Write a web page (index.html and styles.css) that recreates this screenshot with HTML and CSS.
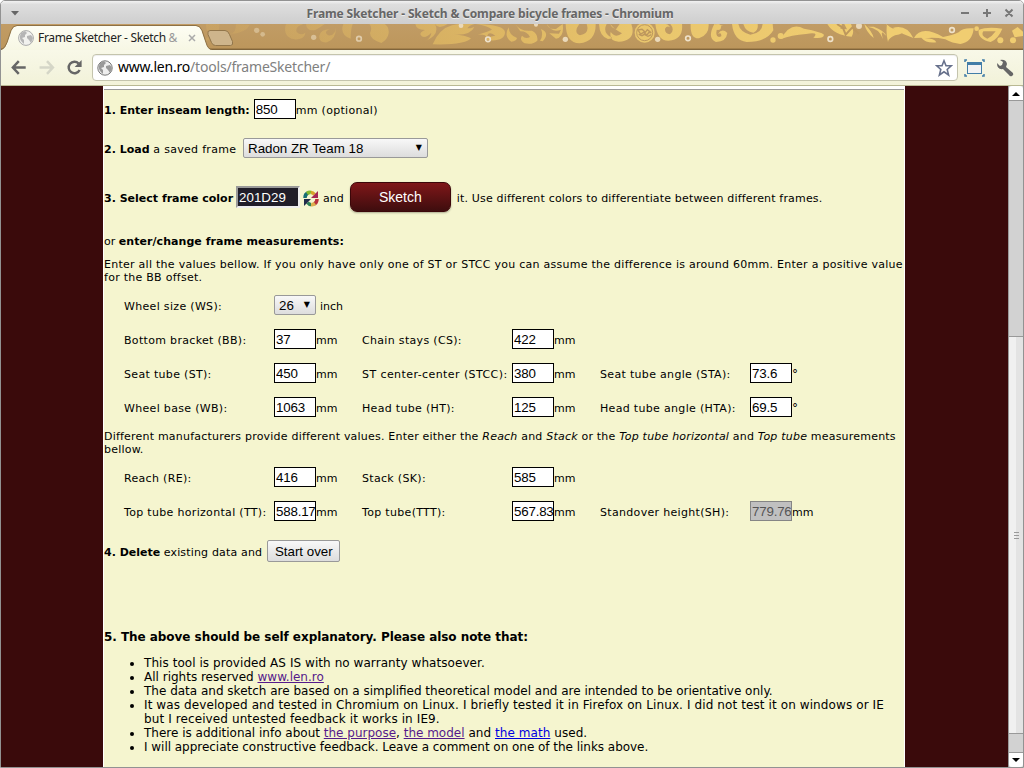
FILE: index.html
```html
<!DOCTYPE html>
<html lang="en">
<head>
<meta charset="utf-8">
<title>Frame Sketcher</title>
<link rel="stylesheet" href="styles.css">
</head>
<body>
<div class="window">
  <header class="titlebar">
    <svg class="menu-arrow" width="10" height="6"><path d="M1 1h8L5 5.500z"/></svg>
    <span class="window-title">Frame Sketcher - Sketch &amp; Compare bicycle frames - Chromium</span>
    <svg class="window-controls" width="56" height="14" fill="none" stroke="#777" stroke-width="2"><path d="M1 7h8M23 7h8M27 3v8M45.500 3.500l7 7M52.500 3.500l-7 7"/></svg>
  </header>

  <div class="tabstrip">
    <svg class="strip-art" width="1024" height="26" viewBox="0 0 1024 26">
      <defs>
        <linearGradient id="gold" gradientUnits="userSpaceOnUse" x1="-60" x2="1900" y1="0" y2="0"><stop offset="0" stop-color="#e7bd62" stop-opacity=".2"/><stop offset=".2" stop-color="#e4bd64" stop-opacity=".5"/><stop offset=".42" stop-color="#e4bd64" stop-opacity=".85"/><stop offset=".6" stop-color="#e9c66d"/><stop offset="1" stop-color="#f0cd71"/></linearGradient>
        <linearGradient id="tabfill" x2="0" y2="1"><stop stop-color="#fdfdf3"/><stop offset="1" stop-color="#f7f7e4"/></linearGradient>
      </defs>
      <g transform="translate(256 -24) scale(.33333)" fill="url(#gold)">
        <path d="M-150 72q-2 25 20 35-30 8-20 15 42-5 40-50zM-60 72q0 30-18 30 45-2 60-28z"/>
        <path d="M90 72c-12 38 18 52 42 44q15-4 16-18-14 10-26-2-6-16 20-24zM150 72q2 23 28 18 18-10 28-18zM240 82q-3 28-24 24-15-10 5-18-26 0-31 19-2 22 23 20 27-8 27-45zM262 72q-12 33 22 44 0-28 6-44zM340 72q10 10 2 27 0 19 34 30 20-12 22-30 2-17-12-27z"/>
        <path d="M478 72q3 18 29 18-17 8-13 15 10 15 32-7-2 16-17 25 44-20 28-51 10 18 38 0zM530 133q20-47 58-57 42-9 68-4-17 4-22 13 22-1 23-8-12 30-64 27 36 1 52 11-20 21-115 18zM660 72q35 5 48 17-17 8-43 15 26-2 28 10 1-24 25-7-27 3-28 13 56 7 57-23-1-23-87-25z"/>
        <path d="M758 82q1 24 25 32-2 10-17 11-24-15-8-43zM778 72q15 24 50 20 19 10 16 30-14 13-38 8-17-10-8-23 10 11 24 4-8-17-29-17zM855 87q28 12 5 37l-8-2q11-16 3-35zM873 72q3 17 27 15l20-15q6 39-20 44l-20-16 29 1 6-12q-27 11-42-17zM929 72q1 57 41 58 50-5 49-58h-27q10 29-20 34-21-9-2-34zM1029 72q2 38 27 45 13-1 12-4-30-14-16-41zM1063 72q3 11 17 16l11-16h35q17 49-38 53-30-2-24-29 15 20 34 4-22-11-35-28z"/>
        <circle cx="1166" cy="98" r="30"/><circle cx="1166" cy="98" r="24" fill="none" stroke="#bd975d" stroke-width="3"/><path d="M1146 90l12-2 10 9 6-8 12 9-7-1-6 8-10-8-9 5zM1148 103l10 4 7-4 11 6 10-5" fill="none" stroke="#bd975d" stroke-width="4"/>
        <path d="M1198 72q6 51 40 50 45-4 40-50h-35q15 18-1 31-16-2-15-17 6-10 15-4-5-10-14-10zM1304 72q-2 45 25 43 31-10 29-43zM1375 72q-23 43 5 54 31-1 34-27-16-16-28 3 11-6 10 7-14 6-15-9-1-21 20-23zM1428 72q5 49 44 54 60 0 80-35l-2-19h-30q-2 28-37 32-31-8-36-32zM1462 72q7 24 30 26 16-7 13-26z"/>
        <path d="M1575 117q29-54 69-31 53 10 60 18-1 13-32 9 20-18-22-11-44 3-75 15zM1714 72q20 34 73 38 10-15-2-38h-20l8 16-20-2 5-14zM1825 72q5 24 28 42-3-18-28-42zM1835 80q35 5 46 37-10-33 8-10 0-13-36-27zM1891 72q24 24 57 18-5 12-31 16-20 9-21 20-7-25-3-54zM1910 84q41-12 62 30-31-10-62-30z"/>
        <path d="M1974 114q22-40 87-3 28-4 47-14 13-15 45-12-4 42-40 47-24-2-45-14-33-7-62-3 30 0 35 12-30 4-45-14z"/>
        <path fill-rule="evenodd" d="M2168 90q25-11 71-4-12 30-35 40-40-9-36-36zm14 4q-10 13 12 22 15-7 25-22z"/><path d="M2268 92l17-11 28 25-37 6z"/>
        <circle cx="1386" cy="81" r="9"/><circle cx="1574" cy="108" r="9"/><circle cx="1551" cy="120" r="8"/><circle cx="2162" cy="86" r="7"/><circle cx="2233" cy="121" r="9"/><circle cx="2271" cy="121" r="9"/>
        <path d="M1743 72l18 12 8 20 20-22 20 20" fill="none" stroke="#bd975d" stroke-width="6"/>
        <g fill="#ead9ba"><circle cx="2" cy="91" r="8" opacity=".5"/><circle cx="20" cy="103" r="7" opacity=".5"/><circle cx="173" cy="112" r="8" opacity=".6"/><circle cx="615" cy="77" r="7"/><circle cx="840" cy="74" r="6"/><circle cx="928" cy="118" r="8"/><circle cx="1205" cy="118" r="8"/><circle cx="1809" cy="78" r="9"/></g>
        <g fill="none" stroke="#eee1ca" stroke-width="5"><circle cx="309" cy="116" r="7" opacity=".7"/><circle cx="696" cy="118" r="7"/><circle cx="1296" cy="115" r="7"/><circle cx="1723" cy="117" r="7"/><circle cx="2088" cy="90" r="7"/></g>
      </g>
      <path d="M0 24.500H1024" stroke="#a3804b"/><path d="M0 25.500H1024" stroke="#80653c"/>
      <path d="M210 6.500h15q3 0 4.500 4l3 7q1 4-2 4h-15q-3 0-4-3l-3.500-8q-1-4 2-4z" fill="#ceb58c" stroke="#92764b"/>
      <path d="M1 26q4-1 6-7l4-12q2-5 6-5H196q4 0 6 5l4 12q2 7 6 7z" fill="url(#tabfill)"/>
      <path d="M1 25.500q4-1 6-7l4-12q2-5 6-5H196q4 0 6 5l4 12q2 7 6 7" fill="none" stroke="#8d7145"/>
    </svg>
    <div class="tab">
      <svg class="globe" width="16" height="16" viewBox="0 0 16 16"><circle cx="8" cy="8" r="7.400" fill="#f1f1ee" stroke="#aaa"/><path d="M3 3l4-2 2 2-2 2v2l-3 1 2 2v4Q1 10 2 6zM9 6l4-1 2 3-2 5-2-3-2-2z" fill="#b5b5b5"/></svg>
      <span class="tab-title">Frame Sketcher - Sketch <i>&amp;</i></span>
      <svg class="tab-close" width="8" height="8" stroke="#aaa" stroke-width="1.500"><path d="M1 1l6 6M7 1L1 7"/></svg>
    </div>
  </div>

  <nav class="toolbar">
    <svg class="nav-icons" width="92" height="35" viewBox="0 0 92 35" fill="none" stroke="#666" stroke-width="2.500">
      <path d="M12.500 17.500H26M19 11l-6 6.500 6 6.500"/><path d="M40 17.500h13M47.500 11l6 6.500-6 6.500" stroke="#d5d6c7"/>
      <path d="M79.500 13.500A5.800 5.800 0 1 0 80.500 20"/><path d="M82.500 10v7h-7z" fill="#666" stroke="none"/>
    </svg>
    <div class="address">
      <svg class="globe" width="16" height="16" viewBox="0 0 16 16"><circle cx="8" cy="8" r="7.200" fill="#eee" stroke="#777"/><path d="M3 3l4-2 2 2-2 2v2l-3 1 2 2v4Q1 10 2 6zM9 6l4-1 2 3-2 5-2-3-2-2z" fill="#999"/></svg>
      <span class="url"><b>www.len.ro</b>/tools/frameSketcher/</span>
      <svg class="star" width="18" height="18" viewBox="0 0 18 18"><path d="M9 1.800l2 5h5.200l-4 3.700 1.400 5.500L9 12.800 4.400 16l1.400-5.500-4-3.700H7z" fill="#fff" stroke="#67718c" stroke-width="1.600"/></svg>
    </div>
    <svg class="tool-icons" width="56" height="24" viewBox="0 0 56 24">
      <rect x="4.500" y="7.500" width="14" height="10" fill="#f2f2f2" stroke="#427da8"/><path d="M4 6h15v3H4z" fill="#427da8"/><path d="M2 6V4h2M19 4h2v2M2 18v2h2M19 20h2v-2" fill="none" stroke="#427da8" stroke-width="1.500"/>
      <path d="M34 7l3 3 2-1 1-3-3-2q6-1 7 4l-1 3 7 6q1 2-1 3-2 1-3-1l-6-6q-6 1-6-6z" fill="#666"/>
    </svg>
  </nav>

  <div class="viewport">
    <main class="page">
      <div class="rule"></div>
      <div class="row inseam"><p><b>1. Enter inseam length:</b></p><input class="field" value="850"><p class="loose">mm (optional)</p></div>
      <div class="row load"><p class="loose"><b>2. Load</b> a saved frame</p><div class="select wide">Radon ZR Team 18<i>▼</i></div></div>
      <div class="row color"><p><b>3. Select frame color</b></p><input class="swatch" value="201D29">
        <svg class="wheel" width="16" height="17" viewBox="0 0 16 17" fill="none" stroke-width="3.500"><path d="M2 8Q2 4 5 3" stroke="#176f72"/><path d="M4 3.500Q6 2 8 2.500" stroke="#87b82d"/><path d="M8 2.500q2 0 3.500 2" stroke="#d7a22c"/><path d="M15 1v7H8z" fill="#a52555"/><path d="M14 9q0 4-3 5" stroke="#b8313d"/><path d="M12 13.500q-2 1.500-4 1" stroke="#dcb14d"/><path d="M8 14.500q-2 0-3.500-2" stroke="#2d8056"/><path d="M1 16V9h7z" fill="#222b4a"/></svg>
        <p>and</p><button class="sketch">Sketch</button><p class="mid">it. Use different colors to differentiate between different frames.</p></div>
      <div class="row or"><p>or <b>enter/change frame measurements:</b></p></div>
      <p class="note first">Enter all the values bellow. If you only have only one of ST or STCC you can assume the difference is around 60mm. Enter a positive value<br>for the BB offset.</p>
      <div class="measures">
        <label>Wheel size (WS):</label><div class="cell"><div class="select small">26<i>▼</i></div><p class="inch">inch</p></div><label></label><div></div><label></label><div></div>
        <label>Bottom bracket (BB):</label><div class="cell"><input class="field" value="37"><p>mm</p></div><label>Chain stays (CS):</label><div class="cell"><input class="field" value="422"><p>mm</p></div><label></label><div></div>
        <label>Seat tube (ST):</label><div class="cell"><input class="field" value="450"><p>mm</p></div><label class="looser">ST center-center (STCC):</label><div class="cell"><input class="field" value="380"><p>mm</p></div><label>Seat tube angle (STA):</label><div class="cell"><input class="field" value="73.6"><p class="degree">°</p></div>
        <label>Wheel base (WB):</label><div class="cell"><input class="field" value="1063"><p>mm</p></div><label>Head tube (HT):</label><div class="cell"><input class="field" value="125"><p>mm</p></div><label>Head tube angle (HTA):</label><div class="cell"><input class="field" value="69.5"><p class="degree">°</p></div>
      </div>
      <p class="note second">Different manufacturers provide different values. Enter either the <em>Reach</em> and <em>Stack</em> or the <em>Top tube horizontal</em> and <em>Top tube</em> measurements<br>bellow.</p>
      <div class="measures">
        <label>Reach (RE):</label><div class="cell"><input class="field" value="416"><p>mm</p></div><label>Stack (SK):</label><div class="cell"><input class="field" value="585"><p>mm</p></div><label></label><div></div>
        <label>Top tube horizontal (TT):</label><div class="cell"><input class="field" value="588.17"><p>mm</p></div><label>Top tube(TTT):</label><div class="cell"><input class="field" value="567.83"><p>mm</p></div><label>Standover height(SH):</label><div class="cell"><input class="field off" value="779.76" readonly><p>mm</p></div>
      </div>
      <div class="row delete"><p><b>4. Delete</b> <span class="mid">existing data and</span></p><button class="plain">Start over</button></div>
      <h2>5. The above should be self explanatory. Please also note that:</h2>
      <ul>
        <li class="spaced">This tool is provided AS IS with no warranty whatsoever.</li>
        <li>All rights reserved <a class="visited">www.len.ro</a></li>
        <li>The data and sketch are based on a simplified theoretical model and are intended to be orientative only.</li>
        <li class="wide-text">It was developed and tested in Chromium on Linux. I briefly tested it in Firefox on Linux. I did not test it on windows or IE<br>but I received untested feedback it works in IE9.</li>
        <li>There is additional info about <a class="visited">the purpose</a>, <a class="visited">the model</a> <span class="spaced">and <a>the math</a> used.</span></li>
        <li class="tight">I will appreciate constructive feedback. Leave a comment on one of the links above.</li>
      </ul>
    </main>
    <div class="scrollbar">
      <div class="arrow"><svg width="9" height="5"><path d="M0 5h8L4 1z"/></svg></div>
      <div class="track"></div>
      <div class="thumb"><span></span><span></span><span></span></div>
      <div class="track end"></div>
      <div class="arrow down"><svg width="9" height="5"><path d="M0 0h8L4 4z"/></svg></div>
    </div>
  </div>
</div>
</body>
</html>
```
FILE: styles.css
```css
* { box-sizing: border-box; }
body { margin: 0; background: #fff; overflow: hidden; font: 11px/13px "DejaVu Sans", sans-serif; color: #000; }
p { margin: 0; white-space: nowrap; }
i { font-style: normal; }
svg { display: block; flex: none; }
.window { width: 1024px; height: 768px; border: 1px solid #929292; border-radius: 5px 5px 0 0; overflow: hidden; display: flex; flex-direction: column; }
.titlebar { height: 23px; flex: none; display: flex; align-items: center; justify-content: space-between; padding: 1px 7px 0 9px; background: linear-gradient(#f2f2f2, #dedede 15%, #cecece); }
.menu-arrow { fill: #666; }
.window-title { padding-top: 1px; font: bold 12px/20px "Noto Sans", sans-serif; color: #666; text-shadow: 0 1px #eee; letter-spacing: -.15px; }
.tabstrip { height: 26px; flex: none; position: relative; background: linear-gradient(#c19c65, #bc965b); }
.strip-art { position: absolute; left: -1px; top: 0; }
.tab { position: relative; display: flex; align-items: center; width: 212px; height: 26px; padding: 2px 0 0 17px; }
.tab-title { width: 146px; margin-left: 4px; font: 12px/20px "Noto Sans", sans-serif; color: #222; white-space: nowrap; letter-spacing: -.32px; }
.tab-title i { color: #999; }
.tab-close { margin-left: 4px; }
.toolbar { height: 36px; flex: none; display: flex; align-items: center; background: linear-gradient(#f8f8e8, #f2f2d9); border-bottom: 1px solid #b9b994; }
.nav-icons { width: 91px; margin-left: -1px; margin-right: 1px; }
.address { width: 866px; height: 27px; display: flex; align-items: center; padding: 0 4px; background: #fff; border: 1px solid #c4c4ad; border-radius: 4px; box-shadow: inset 0 1px 1px #eee; }
.url { flex: 1; margin-left: 5px; padding-bottom: 2px; font: 14px/24px "Noto Sans", sans-serif; color: #808080; letter-spacing: -.2px; }
.url b { font-weight: 400; color: #000; }
.tool-icons { margin-left: 5px; }
.viewport { flex: 1; min-height: 0; display: flex; justify-content: space-between; background: #3a0a0b; padding-left: 102px; }
.page { width: 802px; background: #f5f5cf; border: solid #fff; border-width: 0 1px; overflow: hidden; }
.rule { height: 4px; background: #fff; border-bottom: 1px solid #999; }
.row { display: flex; align-items: center; }
.row p { padding-top: 2px; }
.inseam { height: 38px; }
.inseam .field { margin-left: 4px; }
.load { height: 40px; }
.load p { width: 133px; }
.loose { letter-spacing: .3px; }
.loose b { letter-spacing: 0; }
.mid { letter-spacing: .17px; }
.color { height: 58px; }
.or { height: 30px; }
.row.or p { padding-top: 1px; }
.or b { letter-spacing: .06px; }
.field, .swatch, .select, .plain { font: 13.333px/16px "Liberation Sans", sans-serif; color: #000; }
.field { width: 42px; height: 20px; margin: 0; padding: 1px 0 0 1px; border: 1px solid #000; border-radius: 0; background: #fff; outline: 0; letter-spacing: -.2px; }
.field.off { background: #c0c0c0; color: #555; border-color: #858585; }
.select { display: flex; align-items: center; justify-content: space-between; height: 20px; padding: 2px 5px 0 4px; border: 1px solid #999; border-radius: 2px; background: linear-gradient(#f8f8f8, #ddd); }
.select i { margin-top: -2px; font: 8px/12px "DejaVu Sans", sans-serif; }
.wide { width: 185px; margin-left: 6px; }
.small { width: 42px; }
.inch { margin-left: 4px; }
.swatch { width: 64px; height: 22px; margin-left: 3px; padding: 1px; background: #201d29; color: #fff; border: 2px solid #eee; border-color: #999 #eee #eee #999; border-radius: 0; outline: 0; }
.wheel { margin: 3px 4px 0 3px; }
.sketch { width: 101px; height: 30px; margin: 0 6px; padding: 0; color: #fff; font: 14px/26px "Liberation Sans", sans-serif; border: 1px solid #3c0709; border-radius: 7px; background: linear-gradient(#7f1719, #3e0d0e); box-shadow: 0 1px 2px rgba(0,0,0,.3); }
.note.first { margin: 2px 0 4px; letter-spacing: .266px; }
.note.second { margin: 6px 0 4px; letter-spacing: .207px; }
.measures { display: grid; grid-template-columns: 150px 88px 150px 88px 150px 88px; grid-auto-rows: 34px; align-items: center; margin-left: 20px; }
.measures label { white-space: nowrap; padding-top: 2px; letter-spacing: .32px; }
.measures .looser { letter-spacing: .42px; }
.cell { display: flex; align-items: center; }
.cell p { padding-top: 2px; }
.cell .degree { font-size: 12px; }
.delete { height: 46px; }
.plain { width: 73px; height: 22px; margin-left: 5px; padding: 1px 0 0; border: 1px solid #999; border-radius: 2px; background: linear-gradient(#f8f8f8, #ddd); }
h2 { margin: 52px 0 8px; font: bold 12px/22px "DejaVu Sans", sans-serif; white-space: nowrap; letter-spacing: -.05px; }
ul { margin: 0; padding-left: 40px; font-size: 12px; line-height: 14px; white-space: nowrap; }
.spaced { letter-spacing: .06px; }
.wide-text { letter-spacing: .103px; }
.tight { letter-spacing: -.03px; }
a { color: #0000e0; text-decoration: underline; }
.visited { color: #551a8b; }
.scrollbar { width: 15px; display: flex; flex-direction: column; flex: none; border-left: 1px solid #999; background: #d2d2d2; }
.arrow { height: 15px; flex: none; display: flex; align-items: center; justify-content: center; background: #fff; border-bottom: 1px solid #999; border-radius: 3px 3px 0 0; }
.track { height: 235px; flex: none; }
.thumb { flex: 1; border: solid #999; border-width: 1px 0; background: linear-gradient(90deg, #f0f0f0 50%, #e3e3e3 50%); display: flex; flex-direction: column; align-items: center; justify-content: center; gap: 2px; }
.thumb span { width: 5px; height: 1px; background: #999; }
.track.end { height: 18px; }
.down { border-bottom: 0; border-top: 1px solid #999; border-radius: 0 0 3px 3px; }
```
